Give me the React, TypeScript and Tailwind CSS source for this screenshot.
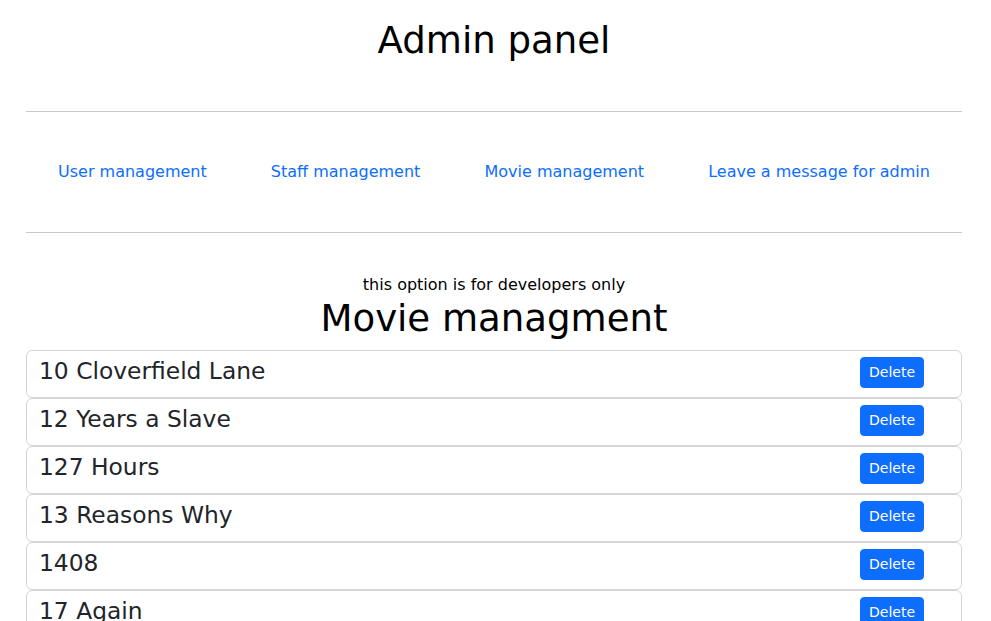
import React from "react";

const movies = [
  "10 Cloverfield Lane",
  "12 Years a Slave",
  "127 Hours",
  "13 Reasons Why",
  "1408",
  "17 Again",
  "2012",
  "21 Jump Street",
];

const links = [
  "User management",
  "Staff management",
  "Movie management",
  "Leave a message for admin",
];

export default function App() {
  return (
    <div
      className="h-[621px] overflow-hidden bg-white pl-[26px] pr-[29px] text-[#212529]"
      style={{ fontFamily: '"DejaVu Sans", sans-serif' }}
    >
      <h1 className="pt-[19px] text-center text-[37.1px] leading-[44px] text-black">
        Admin panel
      </h1>
      <hr className="mt-[48px] border-t border-[#c8c9ca]" />
      <nav className="flex justify-around py-[48px] text-[16px] leading-[24px]">
        {links.map((l) => (
          <a key={l} href="#" className="text-[#0d6efd]">
            {l}
          </a>
        ))}
      </nav>
      <hr className="border-t border-[#c8c9ca]" />
      <p className="mt-[40px] text-center text-[16px] leading-[24px] text-black">
        this option is for developers only
      </p>
      <h1 className="mb-[9px] text-center text-[37.1px] leading-[44px] text-black">
        Movie managment
      </h1>
      <div className="flex flex-col">
        {movies.map((m) => (
          <div
            key={m}
            className="flex h-[48px] items-start justify-between rounded-[6px] border border-[#d3d5d9] pl-[12px] pr-[37px] pt-[6px]"
          >
            <h4 className="text-[23.37px] leading-[28px]">{m}</h4>
            <button className="h-[31px] rounded-[4px] border border-[#0d6efd] bg-[#0d6efd] px-[8px] text-[14px] leading-[21px] text-white">
              Delete
            </button>
          </div>
        ))}
      </div>
    </div>
  );
}
